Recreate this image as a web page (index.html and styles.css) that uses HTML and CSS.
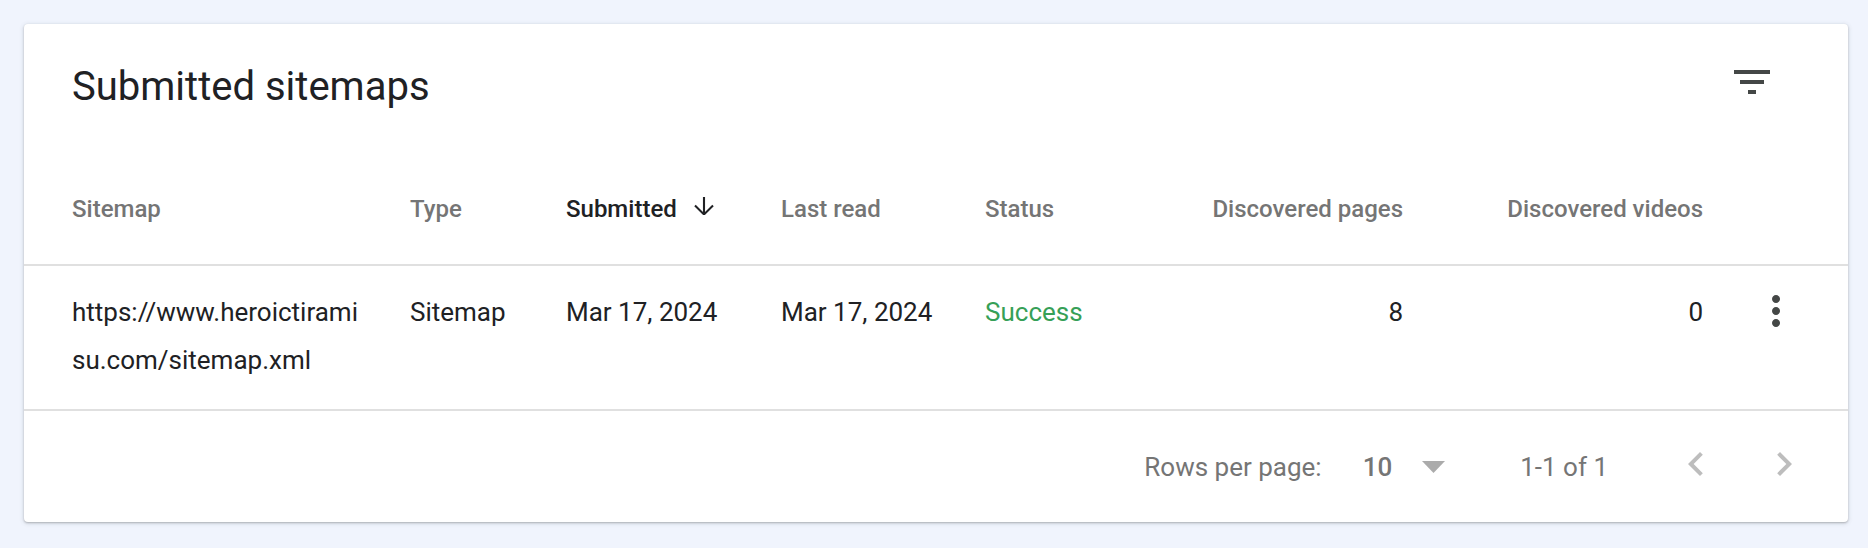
FILE: index.html
```html
<!DOCTYPE html>
<html lang="en">
<head>
<meta charset="utf-8">
<title>Submitted sitemaps</title>
<link rel="stylesheet" href="styles.css">
</head>
<body>
<section class="card">
  <header class="card-head">
    <h1 class="card-title">Submitted sitemaps</h1>
    <button class="icon-btn filter-btn" aria-label="Filter">
      <svg width="48" height="48" viewBox="0 0 24 24"><path d="M10 18h4v-2h-4v2zM3 6v2h18V6H3zm3 7h12v-2H6v2z" fill="#444746"/></svg>
    </button>
  </header>

  <div class="grid thead">
    <div class="th">Sitemap</div>
    <div class="th">Type</div>
    <div class="th th-sorted">Submitted
      <svg class="sort-arrow" width="20" height="18" viewBox="0 0 20 18"><path d="M10 0V16.5M1 8.6L10 17.4L19 8.6" fill="none" stroke="#202124" stroke-width="2.1"/></svg>
    </div>
    <div class="th">Last read</div>
    <div class="th">Status</div>
    <div class="th num">Discovered pages</div>
    <div class="th num">Discovered videos</div>
    <div class="th"></div>
  </div>

  <div class="grid trow">
    <div class="td url">https://www.heroictiramisu.com/sitemap.xml</div>
    <div class="td">Sitemap</div>
    <div class="td">Mar 17, 2024</div>
    <div class="td">Mar 17, 2024</div>
    <div class="td success">Success</div>
    <div class="td num">8</div>
    <div class="td num">0</div>
    <div class="td actions">
      <button class="icon-btn more-btn" aria-label="More">
        <svg width="48" height="48" viewBox="0 0 24 24"><path d="M12 8c1.1 0 2-.9 2-2s-.9-2-2-2-2 .9-2 2 .9 2 2 2zm0 2c-1.1 0-2 .9-2 2s.9 2 2 2 2-.9 2-2-.9-2-2-2zm0 6c-1.1 0-2 .9-2 2s.9 2 2 2 2-.9 2-2-.9-2-2-2z" fill="#444746"/></svg>
      </button>
    </div>
  </div>

  <footer class="pager">
    <span class="pager-label">Rows per page:</span>
    <span class="pager-value">10</span>
    <svg class="pager-drop" width="23" height="12" viewBox="0 0 23 12"><path d="M0 0H23L11.5 12Z" fill="#ababab"/></svg>
    <span class="pager-range">1-1 of 1</span>
    <button class="icon-btn pager-prev" aria-label="Previous page">
      <svg width="48" height="48" viewBox="0 0 24 24"><path d="M15.41 7.41L14 6l-6 6 6 6 1.41-1.41L10.83 12z" fill="#bdbdbd"/></svg>
    </button>
    <button class="icon-btn pager-next" aria-label="Next page">
      <svg width="48" height="48" viewBox="0 0 24 24"><path d="M10 6L8.59 7.41 13.17 12l-4.58 4.59L10 18l6-6z" fill="#bdbdbd"/></svg>
    </button>
  </footer>
</section>
</body>
</html>
```

FILE: styles.css
```css
html, body {
  margin: 0;
  padding: 0;
}

body {
  background: #f0f4fd;
  font-family: Roboto, "Liberation Sans", Arial, sans-serif;
  color: #202124;
  padding: 24px 20px 26px 24px;
}

.card {
  background: #ffffff;
  border-radius: 4px;
  box-shadow: 0 1px 2px rgba(60, 64, 67, 0.3), 0 1px 4px 1px rgba(60, 64, 67, 0.12);
}

.icon-btn {
  border: 0;
  padding: 0;
  margin: 0;
  background: transparent;
  width: 48px;
  height: 48px;
  display: flex;
  align-items: center;
  justify-content: center;
}

.icon-btn svg {
  display: block;
}

.card-head {
  display: flex;
  justify-content: space-between;
  align-items: flex-start;
  padding: 34px 72px 0 48px;
}

.card-title {
  margin: 5px 0 0 0;
  font-size: 40px;
  line-height: 48px;
  font-weight: 400;
  color: #202124;
}

.grid {
  display: grid;
  grid-template-columns: 338px 156px 215px 204px 195px 223px 300px 1fr;
  padding: 0 48px;
}

.thead {
  padding-top: 86px;
  padding-bottom: 43px;
  border-bottom: 2px solid #e0e0e0;
  font-size: 24px;
  line-height: 24px;
  font-weight: 500;
  color: #757575;
}

.th {
  white-space: nowrap;
}

.th-sorted {
  color: #202124;
  display: flex;
  align-items: flex-start;
}

.sort-arrow {
  margin-left: 17px;
  margin-top: 0;
  display: block;
}

.num {
  text-align: right;
}

.trow {
  padding-top: 22px;
  padding-bottom: 25px;
  border-bottom: 2px solid #e0e0e0;
  font-size: 26px;
  line-height: 48px;
  color: #202124;
  align-items: start;
}

.url {
  word-break: break-all;
  padding-right: 44px;
}

.success {
  color: #36a057;
}

.actions {
  display: flex;
  justify-content: flex-end;
}

.more-btn {
  margin-top: -1px;
}

.pager {
  height: 111px;
  display: flex;
  align-items: center;
  justify-content: flex-end;
  padding-right: 40px;
  font-size: 26px;
  color: #757575;
}

.pager-value {
  margin-left: 41px;
  font-weight: 500;
}

.pager-drop {
  display: block;
  margin-left: 30px;
}

.pager-range {
  margin-left: 75px;
}

.pager-prev {
  margin-left: 64px;
  margin-bottom: 5px;
}

.pager-next {
  margin-left: 40px;
  margin-bottom: 5px;
}
```
